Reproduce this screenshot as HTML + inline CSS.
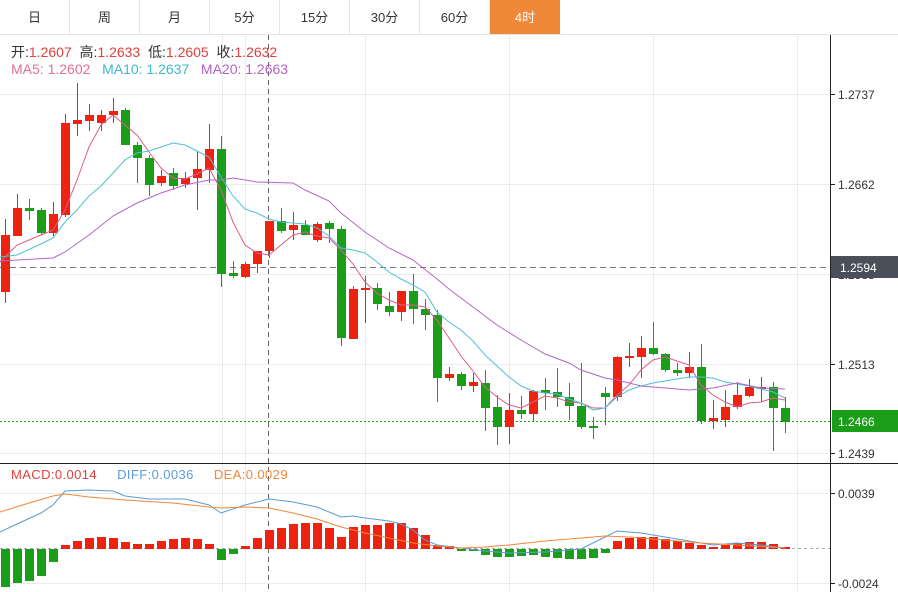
<!DOCTYPE html>
<html><head><meta charset="utf-8"><style>
*{margin:0;padding:0;box-sizing:border-box}
body{width:898px;height:592px;overflow:hidden;background:#fff;font-family:"Liberation Sans","Noto Sans CJK SC",sans-serif;position:relative}
.tabs{position:absolute;left:0;top:0;height:35px;width:898px;border-bottom:1px solid #e3e3e3;display:flex}
.tabs div{width:70px;height:35px;border-right:1px solid #e6e6e6;text-align:center;line-height:35px;font-size:13px;color:#333}
.tabs div.on{background:#f0883a;color:#fff;border-right:none;height:34px}
svg{position:absolute;left:0;top:0}
.info{position:absolute;left:11px;font-size:14px;white-space:nowrap}
</style></head><body>
<div class="tabs"><div>日</div><div>周</div><div>月</div><div>5分</div><div>15分</div><div>30分</div><div>60分</div><div class="on">4时</div></div>
<svg id="s" width="898" height="592" viewBox="0 0 898 592"></svg>
<div class="info" style="top:42px;color:#333">开:<span style="color:#e0413c">1.2607</span>&nbsp; 高:<span style="color:#e0413c">1.2633</span>&nbsp; 低:<span style="color:#e0413c">1.2605</span>&nbsp; 收:<span style="color:#e0413c">1.2632</span></div>
<div class="info" style="top:61px"><span style="color:#e0709a">MA5: 1.2602</span>&nbsp;&nbsp; <span style="color:#3fb8c9">MA10: 1.2637</span>&nbsp;&nbsp; <span style="color:#b461c6">MA20: 1.2663</span></div>
<div class="info" style="top:467px;font-size:13px;letter-spacing:0.4px"><span style="color:#e0413c">MACD:0.0014</span>&nbsp;&nbsp;&nbsp;&nbsp; <span style="color:#5b9bd5">DIFF:0.0036</span>&nbsp;&nbsp;&nbsp;&nbsp; <span style="color:#f0883a">DEA:0.0029</span></div>
<script>
var s=document.getElementById('s'),h='';
function L(x1,y1,x2,y2,c,w,d){h+='<line x1="'+x1+'" y1="'+y1+'" x2="'+x2+'" y2="'+y2+'" stroke="'+c+'" stroke-width="'+(w||1)+'"'+(d?' stroke-dasharray="'+d+'"':'')+'/>';}
function P(pts,c){h+='<polyline fill="none" stroke="'+c+'" stroke-width="1" points="'+pts.map(p=>p.join(',')).join(' ')+'"/>';}
[94,184,274,364,453].forEach(y=>L(0,y+.5,830,y+.5,'#ebebeb'));
[493,583].forEach(y=>L(0,y+.5,830,y+.5,'#ebebeb'));
[222,245,365,509,653,797].forEach(x=>L(x+.5,35,x+.5,592,'#ebebeb'));
L(268.5,35,268.5,592,'#666',1,'5,4');
L(0,267.5,830,267.5,'#777',1,'6,4');
L(0,421.5,830,421.5,'#1a9e1a',1,'2,2');
L(0,548.5,830,548.5,'#aaa',1,'3,3');
var R='#ee2211',G='#1a9e1a';
var c=[[235,292,219,303,R],[208,236,194,236,R],[208,211,199,220,G],[210,233,208,235,G],[214,233,202,236,R],[123,215,114,217,R],[120,124,83,136,R],[115,121,104,131,R],[115,123,110,131,R],[111,115,98,123,R],[110,145,108,145,G],[145,158,142,183,G],[158,185,155,196,G],[176,183,170,186,R],[173,186,168,190,G],[178,184,172,188,R],[169,178,152,210,R],[149,170,124,183,R],[149,274,136,287,G],[273,276,261,278,G],[264,277,262,278,R],[251,264,251,273,R],[221,251,221,258,R],[221,231,208,233,G],[225,230,212,240,R],[225,235,220,235,G],[224,240,222,242,R],[223,229,221,243,G],[229,338,226,346,G],[289,339,286,339,R],[288,290,276,323,R],[288,304,283,310,G],[306,312,292,316,G],[291,312,291,321,R],[291,309,274,324,G],[309,315,299,330,G],[315,378,310,402,G],[374,378,367,381,R],[374,386,372,390,G],[382,386,373,392,R],[383,408,370,431,G],[407,427,395,445,G],[410,427,393,444,R],[410,414,396,419,G],[391,414,390,421,R],[390,393,378,410,G],[392,397,368,407,G],[397,406,383,420,G],[406,427,363,429,G],[426,428,417,439,G],[393,397,387,425,G],[357,397,356,401,R],[356,358,343,367,R],[348,357,336,378,R],[348,354,322,355,G],[354,370,353,372,G],[370,373,363,376,G],[367,373,352,378,R],[367,421,344,424,G],[418,421,400,429,R],[407,420,390,427,R],[395,407,382,409,R],[387,396,379,397,R],[387,389,377,402,R],[387,408,382,451,G],[408,422,397,433,G]];
c.forEach((d,i)=>{var x=5+12*i;L(x+.5,d[2],x+.5,d[3],d[4]);h+='<rect x="'+(x-4)+'" y="'+d[0]+'" width="9" height="'+Math.max(2,d[1]-d[0])+'" fill="'+d[4]+'"/>';});
P([[0,262],[17,245],[41,235],[53,230],[65,210],[77,180],[89,147],[101,125],[113,115],[125,125],[137,135],[149,152],[161,168],[173,178],[185,179],[197,174],[209,168],[221,190],[233,222],[245,245],[257,253],[269,255],[281,245],[293,235],[305,232],[317,236],[329,238],[341,250],[353,264],[365,282],[377,293],[389,300],[401,305],[413,305],[425,307],[437,320],[449,338],[461,356],[473,371],[485,387],[497,397],[509,405],[521,408],[533,402],[545,396],[557,398],[569,402],[581,403],[593,408],[605,408],[617,395],[629,385],[641,370],[653,360],[665,357],[677,361],[689,365],[701,385],[713,395],[725,402],[737,407],[749,403],[761,402],[773,398],[785,400]],'#dd5c8a');
P([[0,257],[17,255],[41,244],[53,238],[65,222],[77,210],[89,196],[101,186],[113,173],[125,160],[137,153],[149,151],[161,147],[173,143],[185,145],[197,151],[209,157],[221,177],[233,196],[245,209],[257,213],[269,219],[281,222],[293,223],[305,224],[317,228],[329,236],[341,248],[353,250],[365,253],[377,262],[389,272],[401,279],[413,285],[425,292],[437,312],[449,322],[461,330],[473,341],[485,355],[497,366],[509,377],[521,386],[533,391],[545,393],[557,394],[569,399],[581,403],[593,410],[605,408],[617,397],[629,390],[641,386],[653,383],[665,381],[677,379],[689,377],[701,377],[713,378],[725,382],[737,384],[749,386],[761,389],[773,392],[785,398]],'#4fc0d4');
P([[0,261],[53,258],[65,252],[89,235],[113,216],[137,203],[161,193],[185,185],[209,180],[221,180],[233,178],[257,182],[293,183],[305,190],[329,201],[341,213],[365,232],[389,248],[413,260],[437,279],[449,289],[461,298],[473,307],[497,325],[521,340],[545,354],[569,363],[581,370],[605,378],[617,380],[641,386],[665,388],[689,390],[713,388],[737,383],[761,388],[785,389]],'#b266c6');
var m=[587,583,581,576,562,545,541,538,537,538,542,544,544,541,539,538,539,544,560,554,546,538,530,528,524,523,523,528,537,527,525,525,523,523,528,535,545,546,547,550,555,557,557,556,555,557,558,559,559,558,553,541,538,537,537,539,541,543,545,547,545,543,542,542,544,547];
m.forEach((y,i)=>{var x=5+12*i-4;var g=y>548||(i>=38&&i<=50)||(i<=4)||i==18||i==19;if(g)h+='<rect x="'+x+'" y="549" width="9" height="'+Math.max(2,y-549)+'" fill="'+G+'"/>';else h+='<rect x="'+x+'" y="'+y+'" width="9" height="'+Math.max(2,549-y)+'" fill="'+R+'"/>';});
P([[0,532],[17,524],[41,513],[53,505],[65,491],[89,490],[113,491],[125,496],[149,499],[185,499],[209,505],[221,513],[245,505],[269,499],[293,502],[317,507],[341,517],[353,516],[365,518],[389,521],[401,524],[413,530],[425,540],[437,545],[461,548],[485,551],[509,553],[545,552],[581,549],[605,537],[617,531],[641,533],[665,537],[689,541],[713,545],[737,543],[761,545],[785,548]],'#5b9bd5');
P([[0,512],[29,503],[53,496],[65,494],[89,497],[125,500],[173,503],[209,507],[221,508],[245,507],[269,508],[293,513],[317,519],[341,527],[365,533],[389,538],[413,543],[437,546],[461,548],[485,547],[509,545],[545,541],[581,538],[605,536],[629,537],[665,540],[701,543],[737,545],[785,548]],'#f0883a');
L(830.5,35,830.5,592,'#222');L(0,463.5,898,463.5,'#222');
function T(y,t){L(830,y+.5,835,y+.5,'#222');h+='<text x="838" y="'+(y+5)+'" font-size="12" fill="#333" font-family="Liberation Sans,sans-serif">'+t+'</text>';}
T(94,'1.2737');T(184,'1.2662');T(274,'1.2588');T(364,'1.2513');T(453,'1.2439');T(493,'0.0039');T(583,'-0.0024');
h+='<rect x="831" y="256" width="67" height="22" fill="#4a4f5a"/><text x="840" y="272" font-size="12" fill="#fff" font-family="Liberation Sans,sans-serif">1.2594</text>';
h+='<rect x="832" y="410" width="66" height="22" fill="#1a9e1a"/><text x="838" y="426" font-size="12" fill="#fff" font-family="Liberation Sans,sans-serif">1.2466</text>';
s.innerHTML=h;
</script>
</body></html>
